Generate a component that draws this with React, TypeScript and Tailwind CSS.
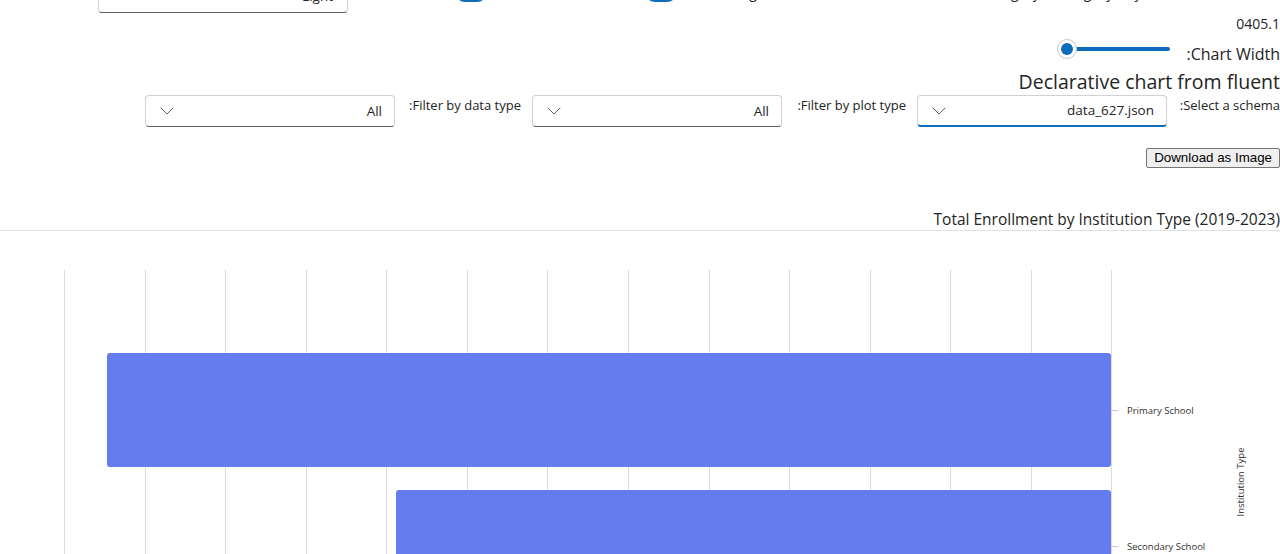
import React from "react";

const font = { fontFamily: '"Open Sans", "Noto Sans", sans-serif' };

function Chevron() {
  return (
    <svg width="14" height="8" viewBox="0 0 14 8" className="shrink-0">
      <path d="M1 1 L7 7 L13 1" fill="none" stroke="#616161" strokeWidth="1" strokeLinecap="round" strokeLinejoin="round" />
    </svg>
  );
}

function Dropdown({ value, focused }: { value: string; focused?: boolean }) {
  return (
    <div
      className={`w-[250px] h-[32px] shrink-0 rounded-[4px] border border-[#d1d1d1] bg-white flex items-center justify-between pl-[14px] pr-[12px] ${
        focused ? "border-b-2 border-b-[#0f6cbd]" : "border-b-[#616161]"
      }`}
    >
      <Chevron />
      <span className="text-[13.5px] text-[#242424]">{value}</span>
    </div>
  );
}

function Label({ children, w }: { children: React.ReactNode; w: string }) {
  return (
    <div className={`${w} text-right text-[13px] leading-[18px] text-[#242424] pt-[1px] whitespace-nowrap shrink-0`}>
      {children}
    </div>
  );
}

export default function App() {
  const grid = [64, 145, 225, 306, 386, 467, 547, 628, 709, 789, 870, 950, 1031, 1111];
  return (
    <div className="w-[1280px] h-[554px] overflow-hidden bg-white text-[#242424]" style={font}>
      {/* top row, scrolled off */}
      <div className="h-[13px] overflow-hidden flex items-end">
        <div className="ml-[98px] w-[250px] h-[32px] shrink-0 rounded-[4px] border border-[#d1d1d1] border-b-[#616161] flex items-center justify-between pl-[16px] pr-[14px]">
          <Chevron />
          <span className="text-[13.5px] mt-[-2px]">Light</span>
        </div>
        <div className="ml-[107px] w-[32px] h-[20px] rounded-full bg-[#0f6cbd] mb-[11px] shrink-0" />
        <div className="ml-[158px] w-[32px] h-[20px] rounded-full bg-[#0f6cbd] mb-[11px] shrink-0" />
        <div className="ml-[22px] text-[14px] leading-[20px] mb-[10px] whitespace-nowrap">
          Enable_gradient, Rounded_corners, Enable_category_sorting_by_key
        </div>
      </div>

      <div className="flex flex-col items-end">
        <div className="text-[14px] leading-[20px] mt-[1px]">0405.1</div>
        <div className="flex items-start mt-[5px]">
          <div className="h-[20px] w-[113px] flex items-center relative">
            <div className="absolute left-[8px] right-0 h-[4px] rounded-full bg-[#0f6cbd]" />
            <div className="relative w-[20px] h-[20px] rounded-full bg-white border border-[#c7c7c7] flex items-center justify-center">
              <div className="w-[12px] h-[12px] rounded-full bg-[#0f6cbd]" />
            </div>
          </div>
          <div className="ml-[17px] text-[16px] leading-[22px] mt-[4px]">:Chart Width</div>
        </div>
        <div className="text-[19.5px] leading-[28px] font-normal mt-[3px]">Declarative chart from fluent</div>
        <div className="flex items-start mt-[-1px]">
          <Dropdown value="All" />
          <div className="w-[11px]" />
          <Label w="w-[115px]">:Filter by data type</Label>
          <div className="w-[11px]" />
          <Dropdown value="All" />
          <div className="w-[12px]" />
          <Label w="w-[112px]">:Filter by plot type</Label>
          <div className="w-[11px]" />
          <Dropdown value="data_627.json" focused />
          <div className="w-[11px]" />
          <Label w="w-[102px]">:Select a schema</Label>
        </div>
        <button
          className="mt-[21px] h-[20px] px-[7px] text-[13.33px] leading-[16px] bg-[#efefef] border border-[#767676] rounded-[2px] text-black"
          style={{ fontFamily: '"Liberation Sans", Arial, sans-serif' }}
        >
          Download as Image
        </button>
        <div className="mt-[40px] text-[15.5px] leading-[22px] font-normal text-[#242424]">
          Total Enrollment by Institution Type (2019-2023)
        </div>
      </div>
      <div className="border-t border-[#e1e1e1]" />

      <svg width="1280" height="324" viewBox="0 0 1280 324" className="block">
        {grid.map((x) => (
          <line key={x} x1={x + 0.5} x2={x + 0.5} y1={39} y2={324} stroke="#dcdcdc" strokeWidth="1" />
        ))}
        <rect x={107} y={122} width={1004} height={114} rx={3} fill="#647cef" />
        <rect x={396} y={259} width={715} height={100} rx={3} fill="#647cef" />
        <line x1={1111} x2={1118} y1={179.5} y2={179.5} stroke="#c8c8c8" />
        <line x1={1111} x2={1118} y1={315.5} y2={315.5} stroke="#c8c8c8" />
        <text x={1127} y={183} fontSize="9.5" fill="#323130" style={font}>Primary School</text>
        <text x={1127} y={319} fontSize="9.5" fill="#323130" style={font}>Secondary School</text>
        <text
          x={0}
          y={0}
          fontSize="9.5"
          fill="#323130"
          textAnchor="middle"
          transform="translate(1244 251) rotate(-90)"
          style={font}
        >
          Institution Type
        </text>
      </svg>
    </div>
  );
}
